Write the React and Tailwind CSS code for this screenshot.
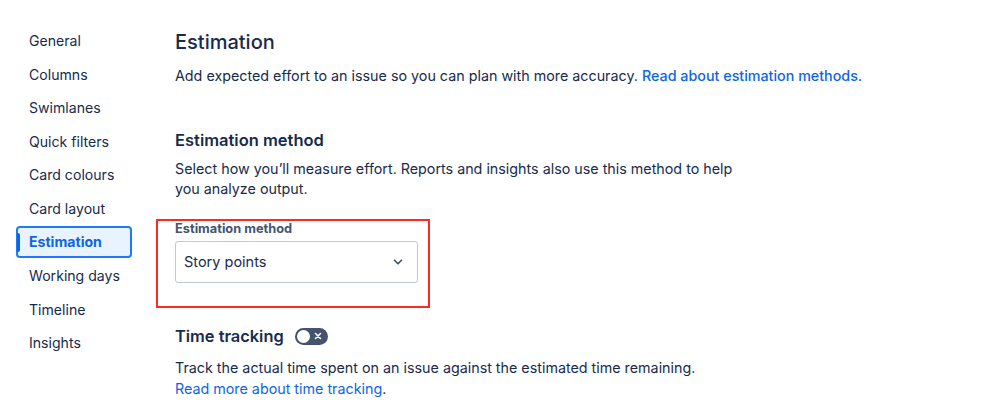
import { ChevronDown } from 'lucide-react';

const navItems = ['General', 'Columns', 'Swimlanes', 'Quick filters', 'Card colours', 'Card layout', 'Estimation', 'Working days', 'Timeline', 'Insights'];

function Sidebar() {
  return (
    <nav className="w-[140px] shrink-0 pl-4 pt-[25px] flex flex-col gap-[2px]">
      {navItems.map(item => {
        const active = item === 'Estimation';
        return (
          <div
            key={item}
            className={`relative h-[31.55px] flex items-center w-[116px] rounded-[4px] text-[14.1px] ${
              active ? 'bg-[#e9f2ff] border-2 border-[#1d7afc] text-[#0c66e4] font-bold pl-[11px]' : 'text-[#172b4d] pl-[13px]'
            }`}
          >
            {active && <span className="absolute left-[-1px] top-[5px] h-[19px] w-[3px] rounded-r-[2px] bg-[#0c66e4]" />}
            {item}
          </div>
        );
      })}
    </nav>
  );
}

function Toggle() {
  return (
    <span className="inline-flex items-center w-[33px] h-[17px] rounded-full bg-[#44546f] px-[2px]">
      <span className="w-[13px] h-[13px] rounded-full bg-white" />
      <svg className="ml-[4px]" width="8" height="8" viewBox="0 0 8 8">
        <path d="M1.5 1.5 L6.5 6.5 M6.5 1.5 L1.5 6.5" stroke="white" strokeWidth="1.6" strokeLinecap="round" />
      </svg>
    </span>
  );
}

export default function App() {
  return (
    <div className="w-[998px] h-[410px] bg-white flex overflow-hidden text-[#172b4d]" style={{ fontFamily: 'Inter, "Noto Sans", sans-serif' }}>
      <Sidebar />
      <main className="pl-[35px] pt-[29px] flex-1">
        <h1 className="text-[20px] leading-[26px] font-medium">Estimation</h1>
        <p className="mt-[11px] text-[14.3px] leading-[20px]">
          Add expected effort to an issue so you can plan with more accuracy.{' '}
          <a className="text-[#0c66e4] font-medium">Read about estimation methods</a>.
        </p>

        <h2 className="mt-[43px] text-[16.5px] leading-[22px] font-semibold">Estimation method</h2>
        <p className="mt-[8px] text-[14.3px] leading-[20px] w-[570px]">
          Select how you’ll measure effort. Reports and insights also use this method to help you analyze output.
        </p>

        <div className="mt-[20px] ml-[-19px] w-[274px] h-[89px] border-2 border-[#ff2a1f] pl-[17px] pt-[0px]">
          <div className="text-[12.8px] leading-[16px] font-bold text-[#44546f]">Estimation method</div>
          <div className="mt-[4px] w-[243px] h-[42px] rounded-[3px] border border-[#c1c7d0] flex items-center justify-between pl-[8px] pr-[12px]">
            <span className="text-[14.5px]">Story points</span>
            <ChevronDown className="w-[14px] h-[14px] text-[#44546f]" strokeWidth={3} />
          </div>
        </div>

        <div className="mt-[17px] flex items-center gap-[11px]">
          <h2 className="text-[16.4px] leading-[22px] font-semibold">Time tracking</h2>
          <Toggle />
        </div>
        <p className="mt-[10px] text-[14.3px] leading-[21px]">
          Track the actual time spent on an issue against the estimated time remaining.
          <br />
          <a className="text-[#0c66e4]">Read more about time tracking</a>.
        </p>
      </main>
    </div>
  );
}
